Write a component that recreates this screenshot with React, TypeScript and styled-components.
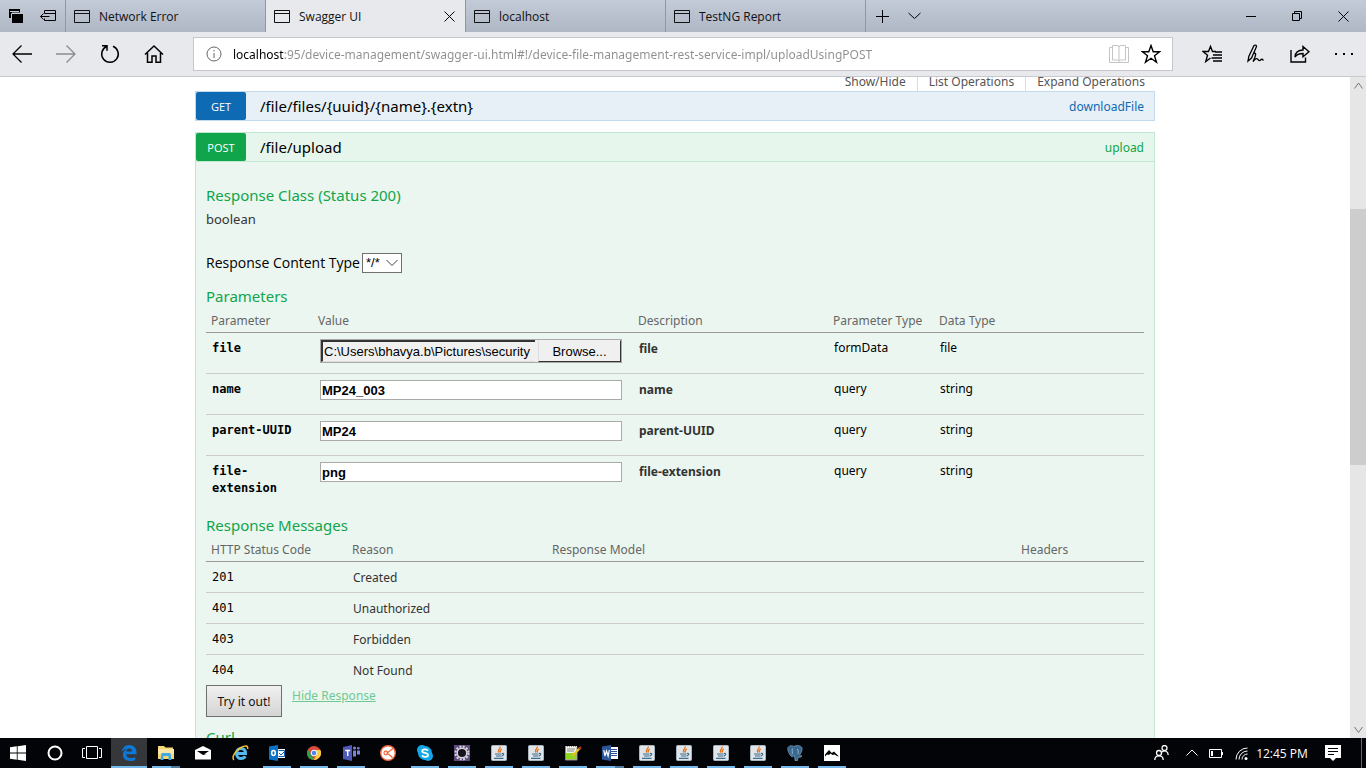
import React from "react";
import styled, { createGlobalStyle, css } from "styled-components";

const ui = `"Open Sans", "Noto Sans", sans-serif`;
const doc = `"Noto Sans", "Open Sans", sans-serif`;
const mono = `"DejaVu Sans Mono", monospace`;
const arial = `"Liberation Sans", Arial, sans-serif`;

const Global = createGlobalStyle`
  * { box-sizing: border-box; }
  body { margin: 0; font-family: ${ui}; overflow: hidden; }
  button { font-family: inherit; }
  svg { display: block; flex: none; }
`;

const Screen = styled.div`
  display: flex;
  flex-direction: column;
  height: 100vh;
  background: #fff;
`;

/* ---------- browser frame ---------- */
const TitleBar = styled.header`
  display: flex;
  flex: none;
  height: 32px;
  background: linear-gradient(#c3cad8, #afb6c4);
`;
const BareButton = styled.button<{ $w: number; $dim?: boolean }>`
  display: flex;
  align-items: center;
  justify-content: center;
  flex: none;
  width: ${(p) => p.$w}px;
  height: 100%;
  padding: 0;
  border: 0;
  background: none;
  color: ${(p) => (p.$dim ? "#8c8c90" : "#000")};
`;
const TabTools = styled.div`
  display: flex;
  flex: none;
  width: 66px;
  border-right: 1px solid #8f96a4;
`;
const Tab = styled.div<{ $active?: boolean }>`
  display: flex;
  align-items: center;
  flex: 0 1 200px;
  border-right: 1px solid #8f96a4;
  ${(p) => p.$active && css`background: #e8e9ed;`}
`;
const TabTitle = styled.button`
  display: flex;
  align-items: center;
  gap: 9px;
  flex: 1;
  height: 100%;
  padding: 0 0 0 8px;
  border: 0;
  background: none;
  font-size: 12px;
  color: #111;
  white-space: nowrap;
`;
const Spacer = styled.div`
  flex: 1;
`;
const Toolbar = styled.nav`
  display: flex;
  align-items: center;
  flex: none;
  height: 45px;
  background: #e8e9ed;
  border-bottom: 1px solid #c9cacd;
`;
const AddressBar = styled.div`
  display: flex;
  align-items: center;
  flex: 1;
  height: 34px;
  margin: 0 17px;
  padding: 0 5px 0 12px;
  background: #fff;
  border: 1px solid #c6c7ca;
`;
const Url = styled.input`
  flex: 1;
  min-width: 0;
  height: 24px;
  margin-left: 11px;
  padding: 0;
  border: 0;
  outline: 0;
  font-family: ${doc};
  font-size: 12px;
  color: transparent;
  background: linear-gradient(90deg, #000 51px, #8e8e8e 51px);
  -webkit-background-clip: text;
  background-clip: text;
`;

/* ---------- page ---------- */
const Viewport = styled.div`
  display: flex;
  flex: 1;
  min-height: 0;
`;
const Page = styled.main`
  flex: 1;
  overflow: hidden;
  font-family: ${doc};
`;
const Container = styled.div`
  width: 100%;
  max-width: 960px;
  margin: 0 auto;
`;
const Options = styled.ul`
  display: flex;
  justify-content: flex-end;
  margin: -4px 0 0;
  padding: 0 10px 0 0;
  list-style: none;
  font-size: 12px;
  line-height: 18px;
`;
const Option = styled.li`
  padding: 0 11px;
  border-right: 1px solid #ddd;
  &:last-child { padding-right: 0; border: 0; }
`;
const OptionLink = styled.a`
  color: #555;
  text-decoration: none;
`;
const Operations = styled.div`
  display: flex;
  flex-direction: column;
  gap: 11px;
`;
type Tone = "get" | "post";
const tones = {
  get: { solid: "#0f6ab4", bg: "#e7f0f7", line: "#c3d9ec" },
  post: { solid: "#10a54a", bg: "#e7f6ec", line: "#c3e8d1" },
};
const OpHeading = styled.div<{ $tone: Tone }>`
  display: flex;
  align-items: center;
  height: 30px;
  padding-right: 10px;
  background: ${(p) => tones[p.$tone].bg};
  border: 1px solid ${(p) => tones[p.$tone].line};
`;
const Method = styled.a<{ $tone: Tone }>`
  width: 50px;
  height: 28px;
  padding-top: 1px;
  border-radius: 2px;
  background: ${(p) => tones[p.$tone].solid};
  color: #fff;
  font-family: ${ui};
  font-size: 11px;
  line-height: 28px;
  text-align: center;
  text-decoration: none;
`;
const Path = styled.a`
  flex: 1;
  padding-left: 14px;
  font-size: 15px;
  line-height: 27px;
  color: #000;
  text-decoration: none;
`;
const Nick = styled.a<{ $tone: Tone }>`
  font-size: 12px;
  color: ${(p) => tones[p.$tone].solid};
  text-decoration: none;
`;
const OpContent = styled.div`
  padding: 21px 10px 0;
  background: #ebf6f0;
  border: solid #c3e8d1;
  border-width: 0 1px;
`;
const H4 = styled.h4`
  margin: 0;
  font-size: 15px;
  font-weight: 400;
  line-height: 24px;
  color: #10a54a;
`;
const Model = styled.div`
  font-size: 13px;
  line-height: 24px;
  color: #333;
`;
const ContentType = styled.div`
  display: flex;
  align-items: center;
  gap: 2px;
  margin: 22px 0 11px;
  font-family: ${ui};
  font-size: 14px;
  line-height: 20px;
`;
const SelectBox = styled.span`
  position: relative;
  display: flex;
  svg { position: absolute; right: 4px; top: 6px; pointer-events: none; }
`;
const Select = styled.select`
  appearance: none;
  width: 40px;
  height: 20px;
  padding: 0 0 0 3px;
  border: 1px solid #707070;
  border-radius: 0;
  background: #fff;
  font-family: ${arial};
  font-size: 13px;
  line-height: 16px;
`;
const Table = styled.table`
  width: 100%;
  table-layout: fixed;
  border-spacing: 0;
`;
const Col = styled.col<{ $w?: number }>`
  width: ${(p) => (p.$w ? `${p.$w}px` : "auto")};
`;
const Th = styled.th`
  height: 25px;
  padding: 1px 5px 0;
  border-bottom: 1px solid #999;
  font-size: 12px;
  font-weight: 400;
  text-align: left;
  color: #666;
`;
const Row = styled.tr<{ $h: number }>`
  height: ${(p) => p.$h}px;
  &:not(:last-child) > td { border-bottom: 1px solid #ccc; }
  &:last-child { height: ${(p) => p.$h - 1}px; }
`;
const Td = styled.td<{ $kind?: "code" | "name" | "strong" | "plain" }>`
  padding: 6px 6px 0;
  vertical-align: top;
  font-size: 12px;
  line-height: 18px;
  color: ${(p) => (p.$kind && p.$kind !== "strong" ? "#000" : "#333")};
  ${(p) => (p.$kind === "name" || p.$kind === "code") && css`font-family: ${mono}; line-height: 17px;`}
  ${(p) => (p.$kind === "name" || p.$kind === "strong") && css`padding-top: 7px; font-weight: 700;`}
`;
const StatusTd = styled(Td)`
  padding-top: 7px;
`;
const ValueTd = styled.td`
  padding: 6px 5px 0 7px;
  vertical-align: top;
`;
const TextInput = styled.input`
  display: block;
  width: 302px;
  height: 20px;
  padding: 1px;
  border: 1px solid #aaa;
  background: #fff;
  font: 700 13px ${arial};
`;
const FilePicker = styled.div`
  display: flex;
  width: 302px;
  height: 24px;
  border: 1px solid #aaa;
  background: #f0f0f0;
`;
const FileName = styled.input`
  flex: 1;
  min-width: 0;
  margin-right: 3px;
  padding: 0 0 0 1px;
  border: solid;
  border-width: 2px 0 1px 2px;
  border-color: #333 #ddd #ddd #333;
  background: #f0f0f0;
  font: 13px ${arial};
`;
const Browse = styled.button`
  width: 83px;
  padding: 0;
  border: 1px solid;
  border-color: #f0f0f0 #333 #333 #ddd;
  background: #f0f0f0;
  font: 13px ${arial};
`;
const Messages = styled.section`
  padding-top: 16px;
`;
const Submit = styled.div`
  display: flex;
  align-items: flex-start;
  gap: 10px;
  padding-bottom: 8px;
`;
const TryButton = styled.button`
  width: 76px;
  height: 32px;
  padding: 0;
  border: 1px solid #707070;
  background: linear-gradient(#f0f0f0, #d4d4d4);
  font-size: 12px;
  color: #111;
`;
const HideLink = styled.a`
  font-size: 12px;
  line-height: 21px;
  color: #70c992;
`;

const Scrollbar = styled.div`
  display: flex;
  flex-direction: column;
  flex: none;
  width: 16px;
  background: #e6e6e6;
`;
const ScrollArrow = styled.button`
  display: flex;
  align-items: center;
  justify-content: center;
  height: 17px;
  padding: 0;
  border: 0;
  background: none;
`;
const Gap = styled.div<{ $f: number }>`
  flex: ${(p) => p.$f};
`;
const Thumb = styled(Gap)`
  background: #cdcdcd;
`;

/* ---------- taskbar ---------- */
const Taskbar = styled.footer`
  display: flex;
  flex: none;
  height: 30px;
  background: #020408;
`;
const Task = styled.button<{ $active?: boolean; $open?: boolean; $stack?: boolean }>`
  display: flex;
  flex-direction: column;
  align-items: center;
  justify-content: center;
  flex: none;
  width: 36px;
  margin-right: 1px;
  padding: 0;
  border: 0;
  background: ${(p) => (p.$active ? "#35373b" : "none")};
  &::after {
    content: "";
    width: ${(p) => (p.$active ? 36 : 28)}px;
    height: 2px;
    background: ${(p) =>
      p.$stack ? "linear-gradient(90deg, #76b9ed 19px, #4e7c9f 19px)" : p.$open || p.$active ? "#76b9ed" : "none"};
  }
`;
const IconSlot = styled.span`
  display: flex;
  flex: 1;
  align-items: center;
  padding-top: 2px;
`;
const Tray = styled.div<{ $w: number }>`
  display: flex;
  align-items: center;
  justify-content: center;
  width: ${(p) => p.$w}px;
  font-size: 12px;
  color: #fff;
  white-space: nowrap;
`;
const ShowDesktop = styled.div`
  width: 5px;
  border-left: 1px solid #666;
`;

/* ---------- icons ---------- */
const Ico = ({ w = 20, h = w, s = 1, children }: { w?: number; h?: number; s?: number; children: React.ReactNode }) => (
  <svg width={w} height={h} viewBox={`0 0 ${w} ${h}`} fill="none" stroke="currentColor" strokeWidth={s} aria-hidden="true">
    {children}
  </svg>
);
const WindowIcon = () => <Ico w={16} h={13}><path d="M.5.5h15v12H.5zM.5 3.5h15" /></Ico>;
const CloseIcon = () => <Ico w={11}><path d="M.5.5l10 10M10.5.5l-10 10" /></Ico>;
const Chevron = ({ up, w = 12, c }: { up?: boolean; w?: number; c?: string }) => (
  <Ico w={w} h={8}><path stroke={c} d={up ? `M.5 6.5L${w / 2} 1l${w / 2 - 0.5} 5.5` : `M.5 1L${w / 2} 6.5 ${w - 0.5} 1`} /></Ico>
);
const Star = "M10 1.5l2.200 6.200h6.500l-5.200 4 2 6.500L10 14.300l-5.500 3.900 2-6.500-5.200-4h6.500z";

const Java = () => (
  <Ico w={16}>
    <rect x=".5" y=".5" width="15" height="15" rx="1" fill="#dfe5ea" stroke="#aab4bd" />
    <path d="M9 1.500c1.500 2-3.500 3-1 6M11 4c-2.500 1-2 2-1.500 3.500" stroke="#e8761a" strokeWidth="1.300" />
    <path d="M4 9h6.500M5 11h5.500M11 8.500c2.500-.5 2 1.500 0 2.500M3 13.300h9.500" stroke="#3f6c8c" strokeWidth="1.200" />
  </Ico>
);
const Windows = () => <Ico w={16}><path fill="#fff" stroke="none" d="M0 2.300L6.800 1.300V7.600H0zM7.600 1.200L16 0v7.600H7.600zM0 8.400h6.800v6.300L0 13.700zM7.600 8.400H16V16l-8.400-1.200z" /></Ico>;
const Cortana = () => <Ico w={16}><circle cx="8" cy="8" r="6.500" stroke="#fff" strokeWidth="2" /></Ico>;
const TaskView = () => <Ico w={20} h={14}><path stroke="#fff" d="M4.500.5h11v12h-11zM3 2.500H.5v9H3M17 2.500h2.500v9H17" /></Ico>;
const Edge = () => <Ico w={16}><path fill="#0d78d7" stroke="none" d="M.5 7C1.200 2.800 4.200 0 8.300 0 12.800 0 15.500 3.200 15.500 7.300V9.200H5.200c.2 2.700 2.300 3.800 4.900 3.800 1.700 0 3-.4 4.200-1.100v3c-1.300.8-3.100 1.100-5.100 1.100-4.500 0-7.300-2.500-7.300-6.200C1.900 7.200 3.500 5.200 6 4.100 3.600 4.200 1.600 5.400.5 7zM5.300 6.500h5.600C10.900 4.600 10 3.600 8.300 3.600S5.600 4.800 5.300 6.500z" /></Ico>;
const Explorer = () => <Ico w={16}><path fill="#f7d774" stroke="none" d="M0 1h6l1.500 1.500H15V4h1v10H0z" /><path fill="#fbe7a2" stroke="none" d="M0 4h16v5H0z" /><path fill="#3fa9e8" stroke="none" d="M3.500 8h9l1 7h-3v-4h-5v4h-3z" /></Ico>;
const Mail = () => <Ico w={16} h={14}><path fill="#fff" stroke="none" d="M0 4l8-4 8 4v9.500H0z" /><path fill="#020408" stroke="none" d="M2 5h12L9.500 8h2L8 9 2 5z" /></Ico>;
const IE = () => <Ico w={17} h={16}><path stroke="#55b9ee" strokeWidth="3" d="M4 8.500h9.500C13.500 5 11.500 3.500 9 3.500S4.500 5.500 4.500 8.500 6.500 13.500 9 13.500c2 0 3.500-.7 4.300-2.200" /><path stroke="#f2c230" strokeWidth="1.500" d="M2 15C-1 12 4 5 9 2.500 13 .5 16.500 0 15.500 4" /></Ico>;
const Outlook = () => <Ico w={17} h={16}><path fill="#fff" stroke="none" d="M8 4h8v9H8z" /><path stroke="#0a64b4" d="M9.500 5.500h6v6h-6M10 8l2 2 4-4" /><path fill="#0b72c6" stroke="none" d="M0 1.500L9 0v16l-9-1.500z" /><ellipse cx="4.500" cy="8" rx="1.800" ry="2.400" stroke="#fff" strokeWidth="1.500" /></Ico>;
const Chrome = () => <Ico w={14}><circle cx="7" cy="7" r="7" fill="#dd4b3e" stroke="none" /><path fill="#2ba24c" stroke="none" d="M.8 3.800L5 10l2 4A7 7 0 0 1 .8 3.800z" /><path fill="#fccd3a" stroke="none" d="M7 4h6.400A7 7 0 0 1 6.800 14L10 8z" /><circle cx="7" cy="7" r="2.800" fill="#4285f4" stroke="#fff" /></Ico>;
const Teams = () => <Ico w={17} h={16}><path fill="#5059b8" stroke="none" d="M0 2l9-2v16l-9-2z" /><path fill="#7b83d8" stroke="none" d="M10 5.500h3v6h-3zM14 5.500h3v4h-3z" /><circle cx="11.500" cy="3" r="1.600" fill="#7b83d8" stroke="none" /><circle cx="15.300" cy="3.200" r="1.300" fill="#7b83d8" stroke="none" /><path stroke="#fff" strokeWidth="1.400" d="M2.200 5.500h5M4.700 5.500v5.500" /></Ico>;
const Postman = () => <Ico w={16}><circle cx="8" cy="8" r="7.300" fill="#fff" stroke="#f0663c" strokeWidth="1.400" /><path stroke="#f0663c" strokeWidth="1.200" d="M13 3.500L7 8l5.500 4.500" /><circle cx="5.800" cy="8" r="1.800" stroke="#f0663c" strokeWidth="1.200" /></Ico>;
const Skype = () => <Ico w={16}><circle cx="5" cy="5" r="5" fill="#11a7e8" stroke="none" /><circle cx="11" cy="11" r="5" fill="#11a7e8" stroke="none" /><circle cx="8" cy="8" r="7" fill="#11a7e8" stroke="none" /><path stroke="#fff" strokeWidth="1.800" d="M11 5.500C10 3.800 5.200 3.800 5.200 6.200 5.200 8.500 11 7.300 11 10c0 2.400-5 2.400-6 .3" /></Ico>;
const Eclipse = () => <Ico w={16}><rect width="16" height="16" fill="#5d4a7a" stroke="none" /><circle cx="8" cy="8" r="6.500" stroke="#d8d4de" strokeWidth="2" strokeDasharray="2 1.400" /><circle cx="8" cy="8" r="4.800" fill="#17141e" stroke="#d8d4de" strokeWidth="1.500" /></Ico>;
const Notepad = () => <Ico w={17} h={16}><path fill="#f2f2ea" stroke="none" d="M0 1h12v14H0z" /><path fill="#8fd61f" stroke="none" d="M1 8h10.500v6.500H1z" /><path stroke="#8b8b80" strokeDasharray="1 1" d="M0 1.500h12" /><path stroke="#888" d="M2 4h8M2 6h7M.5 2v13h11.500V2" /><path stroke="#e8c01c" strokeWidth="2.200" d="M7.500 11L15 3" /><path stroke="#c9302c" strokeWidth="2.200" d="M14 4l2-2" /></Ico>;
const Word = () => <Ico w={16}><path fill="#fff" stroke="none" d="M8 2h8v12H8z" /><path stroke="#2b579a" d="M9 4.500h6M9 6.500h6M9 8.500h6M9 10.500h6" /><path fill="#2b579a" stroke="none" d="M0 1.500L9 0v16l-9-1.500z" /><path stroke="#fff" strokeWidth="1.200" d="M1.800 5l1.100 6L4.500 6l1.600 5 1.200-6" /></Ico>;
const Postgres = () => <Ico w={16}><path fill="#38688f" stroke="#7fa6c2" strokeWidth=".7" d="M1 2.500C3 0 5.500.5 7 1.500 9 0 14 0 15 3c.5 3-1.500 6-2.500 7 .5 1 2 .5 2.500 1-1 1.500-3 1.500-4 1l-.5 3.500H8l-.5-5L5 12C2.500 10 0 5 1 2.500z" /><path stroke="#a9c6da" strokeWidth=".8" d="M5.500 3.500c-1 2 .5 4-.5 6M10 4c2 1 1 3 1 5" /></Ico>;
const Photos = () => <Ico w={16}><rect width="16" height="16" fill="#fff" stroke="none" /><path fill="#020408" stroke="none" d="M1 11.500V9.500L5 5l2.800 3L10 6.500l5 5-2-.5-2.500-1.500-2 .5-2-1.500L5 10l-2-.5z" /></Ico>;

const tasks: { name: string; icon: React.ReactNode; open?: boolean; active?: boolean; stack?: boolean }[] = [
  { name: "Start", icon: <Windows /> },
  { name: "Cortana", icon: <Cortana /> },
  { name: "Task View", icon: <TaskView /> },
  { name: "Microsoft Edge", icon: <Edge />, active: true },
  { name: "File Explorer", icon: <Explorer />, stack: true },
  { name: "Mail", icon: <Mail /> },
  { name: "Internet Explorer", icon: <IE /> },
  { name: "Outlook", icon: <Outlook />, open: true },
  { name: "Chrome", icon: <Chrome />, open: true },
  { name: "Teams", icon: <Teams />, open: true },
  { name: "Postman", icon: <Postman /> },
  { name: "Skype", icon: <Skype />, open: true },
  { name: "Eclipse", icon: <Eclipse />, open: true },
  { name: "Java 1", icon: <Java />, open: true },
  { name: "Java 2", icon: <Java />, open: true },
  { name: "Notepad++", icon: <Notepad />, open: true },
  { name: "Word", icon: <Word />, stack: true },
  { name: "Java 3", icon: <Java />, open: true },
  { name: "Java 4", icon: <Java />, open: true },
  { name: "Java 5", icon: <Java />, open: true },
  { name: "Java 6", icon: <Java />, open: true },
  { name: "pgAdmin", icon: <Postgres />, open: true },
  { name: "Photos", icon: <Photos />, open: true },
];

const tabs = ["Network Error", "Swagger UI", "localhost", "TestNG Report"];
const params = [
  { name: "name", value: "MP24_003" },
  { name: "parent-UUID", value: "MP24" },
  { name: "file-extension", value: "png" },
];
const statuses = [
  ["201", "Created"],
  ["401", "Unauthorized"],
  ["403", "Forbidden"],
  ["404", "Not Found"],
];

export default function App() {
  return (
    <Screen>
      <Global />
      <TitleBar>
        <TabTools>
          <BareButton $w={32} aria-label="Tabs you've set aside">
            <Ico w={16} h={14}><path fill="#000" stroke="none" d="M1 0h11v3.500H4V9H1zM4 5h11v9H4z" /><path stroke="#c3cad8" d="M2 2.500h9M3.500 10V4.500H12" /></Ico>
          </BareButton>
          <BareButton $w={32} aria-label="Set these tabs aside">
            <Ico w={16} h={12}><path d="M4.500 3.500v-3h11v10h-11v-2M4.500 3.500h11M.5 6.500h9M3.500 3.500l-3 3 3 3" /></Ico>
          </BareButton>
        </TabTools>
        {tabs.map((t) => (
          <Tab key={t} $active={t === "Swagger UI"}>
            <TabTitle><WindowIcon />{t}</TabTitle>
            {t === "Swagger UI" && <BareButton $w={32} aria-label="Close tab"><CloseIcon /></BareButton>}
          </Tab>
        ))}
        <BareButton $w={32} aria-label="New tab"><Ico w={13}><path d="M6.500 0v13M0 6.500h13" /></Ico></BareButton>
        <BareButton $w={32} aria-label="Show tab previews"><Chevron w={13} /></BareButton>
        <Spacer />
        <BareButton $w={46} aria-label="Minimize"><Ico w={10}><path d="M0 5.500h10" /></Ico></BareButton>
        <BareButton $w={46} aria-label="Restore"><Ico w={10}><path d="M.5 2.500h7v7h-7zM2.500 2.500v-2h7v7h-2" /></Ico></BareButton>
        <BareButton $w={46} aria-label="Close"><CloseIcon /></BareButton>
      </TitleBar>
      <Toolbar>
        <BareButton $w={44} aria-label="Back"><Ico w={20} s={1.3}><path d="M1 10h19M9.500 1.500L1 10l8.500 8.500" /></Ico></BareButton>
        <BareButton $w={44} $dim aria-label="Forward"><Ico w={20} s={1.3}><path d="M0 10h19M10.500 1.500L19 10l-8.500 8.500" /></Ico></BareButton>
        <BareButton $w={44} aria-label="Refresh"><Ico w={20} s={1.5}><path d="M13 2.300A8.300 8.300 0 1 1 6.500 2.500M2 1.700h5v5" /></Ico></BareButton>
        <BareButton $w={44} aria-label="Home"><Ico w={20} s={1.5}><path d="M1 10.500L10 2l9 8.500M3.500 9v9.300H8V12h4v6.300h4.500V9" /></Ico></BareButton>
        <AddressBar>
          <Ico w={16}><circle cx="8" cy="8" r="7" stroke="#666" /><path stroke="#666" d="M8 7v5M8 4v1.500" /></Ico>
          <Url aria-label="Address" defaultValue="localhost:95/device-management/swagger-ui.html#!/device-file-management-rest-service-impl/uploadUsingPOST" />
          <BareButton $w={32} $dim aria-label="Reading view"><Ico w={20}><path stroke="#c4c4c4" d="M10 2.500v14M3.500 1.500H8q2 0 2 1.500 0-1.500 2-1.500h4.500V16H12q-2 0-2 1.500Q10 16 8 16H3.500zM3 3.500H.5v15h19v-15H17" /></Ico></BareButton>
          <BareButton $w={32} aria-label="Add to favorites"><Ico w={20} s={1.4}><path d={Star} /></Ico></BareButton>
        </AddressBar>
        <BareButton $w={44} aria-label="Hub"><Ico w={20} s={1.4}><path d="M14 7.500H10.500L8.500 2.500 6.500 7.500H1l4.500 3.700-1.700 6.300 4.700-3.500M11 11h9M9.500 14h10.500M11 17h9M13 8h7" /></Ico></BareButton>
        <BareButton $w={44} aria-label="Web notes"><Ico w={20} s={1.3}><path d="M2 17l.8-4.500L8 1.500c1.500-1 3 0 2.300 1.500L5.500 14zM5.500 14L2 17M8 9c2.500 0 2 2.500-1 8.500 2.500-3 3.500-3.500 4.500-2.500s1.500 2.500 3 1 2-.5 3 .5" /></Ico></BareButton>
        <BareButton $w={43} aria-label="Share"><Ico w={20} s={1.4}><path d="M1 6v12h14.500v-4.500M5 13c.5-5.500 4-7 8-7V2.500l6 5.200-6 5V9.500c-3 0-6 .5-8 3.500z" /></Ico></BareButton>
        <BareButton $w={45} aria-label="More"><Ico w={18} h={3}><path fill="#000" stroke="none" d="M0 0h2v2H0zM8 0h2v2H8zM16 0h2v2h-2z" /></Ico></BareButton>
      </Toolbar>

      <Viewport>
        <Page>
          <Container>
            <Options>
              <Option><OptionLink href="#">Show/Hide</OptionLink></Option>
              <Option><OptionLink href="#">List Operations</OptionLink></Option>
              <Option><OptionLink href="#">Expand Operations</OptionLink></Option>
            </Options>
            <Operations>
              <OpHeading $tone="get">
                <Method $tone="get" href="#">GET</Method>
                <Path href="#">/file/files/&#123;uuid&#125;/&#123;name&#125;.&#123;extn&#125;</Path>
                <Nick $tone="get" href="#">downloadFile</Nick>
              </OpHeading>
              <section>
                <OpHeading $tone="post">
                  <Method $tone="post" href="#">POST</Method>
                  <Path href="#">/file/upload</Path>
                  <Nick $tone="post" href="#">upload</Nick>
                </OpHeading>
                <OpContent>
                  <H4>Response Class (Status 200)</H4>
                  <Model>boolean</Model>
                  <ContentType>
                    <label htmlFor="ctype">Response Content Type</label>
                    <SelectBox>
                      <Select id="ctype"><option>*/*</option></Select>
                      <Chevron w={12} c="#444" />
                    </SelectBox>
                  </ContentType>
                  <H4>Parameters</H4>
                  <Table>
                    <colgroup>
                      <Col $w={107} /><Col $w={320} /><Col $w={195} /><Col $w={106} /><Col />
                    </colgroup>
                    <thead>
                      <tr><Th>Parameter</Th><Th>Value</Th><Th>Description</Th><Th>Parameter Type</Th><Th>Data Type</Th></tr>
                    </thead>
                    <tbody>
                      <Row $h={41}>
                        <Td $kind="name">file</Td>
                        <ValueTd>
                          <FilePicker>
                            <FileName readOnly aria-label="file" defaultValue="C:\Users\bhavya.b\Pictures\security" />
                            <Browse>Browse...</Browse>
                          </FilePicker>
                        </ValueTd>
                        <Td $kind="strong">file</Td>
                        <Td $kind="plain">formData</Td>
                        <Td $kind="plain">file</Td>
                      </Row>
                      {params.map((p) => (
                        <Row key={p.name} $h={41}>
                          <Td $kind="name">{p.name}</Td>
                          <ValueTd><TextInput aria-label={p.name} defaultValue={p.value} /></ValueTd>
                          <Td $kind="strong">{p.name}</Td>
                          <Td $kind="plain">query</Td>
                          <Td $kind="plain">string</Td>
                        </Row>
                      ))}
                    </tbody>
                  </Table>
                  <Messages>
                    <H4>Response Messages</H4>
                    <Table>
                      <colgroup>
                        <Col $w={141} /><Col $w={200} /><Col $w={469} /><Col />
                      </colgroup>
                      <thead>
                        <tr><Th>HTTP Status Code</Th><Th>Reason</Th><Th>Response Model</Th><Th>Headers</Th></tr>
                      </thead>
                      <tbody>
                        {statuses.map(([code, reason]) => (
                          <Row key={code} $h={31}>
                            <StatusTd $kind="code">{code}</StatusTd>
                            <StatusTd>{reason}</StatusTd>
                            <StatusTd />
                            <StatusTd />
                          </Row>
                        ))}
                      </tbody>
                    </Table>
                  </Messages>
                  <Submit>
                    <TryButton>Try it out!</TryButton>
                    <HideLink href="#">Hide Response</HideLink>
                  </Submit>
                  <H4>Curl</H4>
                </OpContent>
              </section>
            </Operations>
          </Container>
        </Page>
        <Scrollbar>
          <ScrollArrow aria-label="Scroll up"><Chevron up w={9} c="#777" /></ScrollArrow>
          <Gap $f={115} />
          <Thumb $f={256} />
          <Gap $f={256} />
          <ScrollArrow aria-label="Scroll down"><Chevron w={9} c="#777" /></ScrollArrow>
        </Scrollbar>
      </Viewport>

      <Taskbar>
        {tasks.map((t) => (
          <Task key={t.name} aria-label={t.name} $active={t.active} $open={t.open} $stack={t.stack}>
            <IconSlot>{t.icon}</IconSlot>
          </Task>
        ))}
        <Spacer />
        <Tray $w={31}><Ico w={15} h={16} s={1.3}><circle cx="5" cy="8" r="2.500" /><circle cx="10.500" cy="3" r="2.500" /><path d="M.8 15c0-5.500 8.400-5.500 8.400 0M8 7c3-2.500 6.200-.5 6.200 3" /></Ico></Tray>
        <Tray $w={30}><Chevron up w={12} /></Tray>
        <Tray $w={19}><Ico w={15} h={9}><path d="M.5.5h12v8H.5zM13.500 3v3" /><path fill="#fff" stroke="none" d="M2 2h2v5H2z" /></Ico></Tray>
        <Tray $w={30}><Ico w={13}><path d="M1 12.500A11.500 11.500 0 0 1 12.500 1M4 12.500A8.500 8.500 0 0 1 12.500 4M7 12.500A5.500 5.500 0 0 1 12.500 7" /><circle cx="11" cy="11.500" r="1.500" fill="#fff" stroke="none" /></Ico></Tray>
        <Tray $w={52}>12:45 PM</Tray>
        <Tray $w={50}><Ico w={16} h={16}><path fill="#fff" stroke="none" d="M0 0h16v13h-5l-3 3-3-3H0z" /><path stroke="#020408" d="M3 3.500h10M3 6.500h10M3 9.500h6" /></Ico></Tray>
        <Tray $w={3} />
        <ShowDesktop />
      </Taskbar>
    </Screen>
  );
}
